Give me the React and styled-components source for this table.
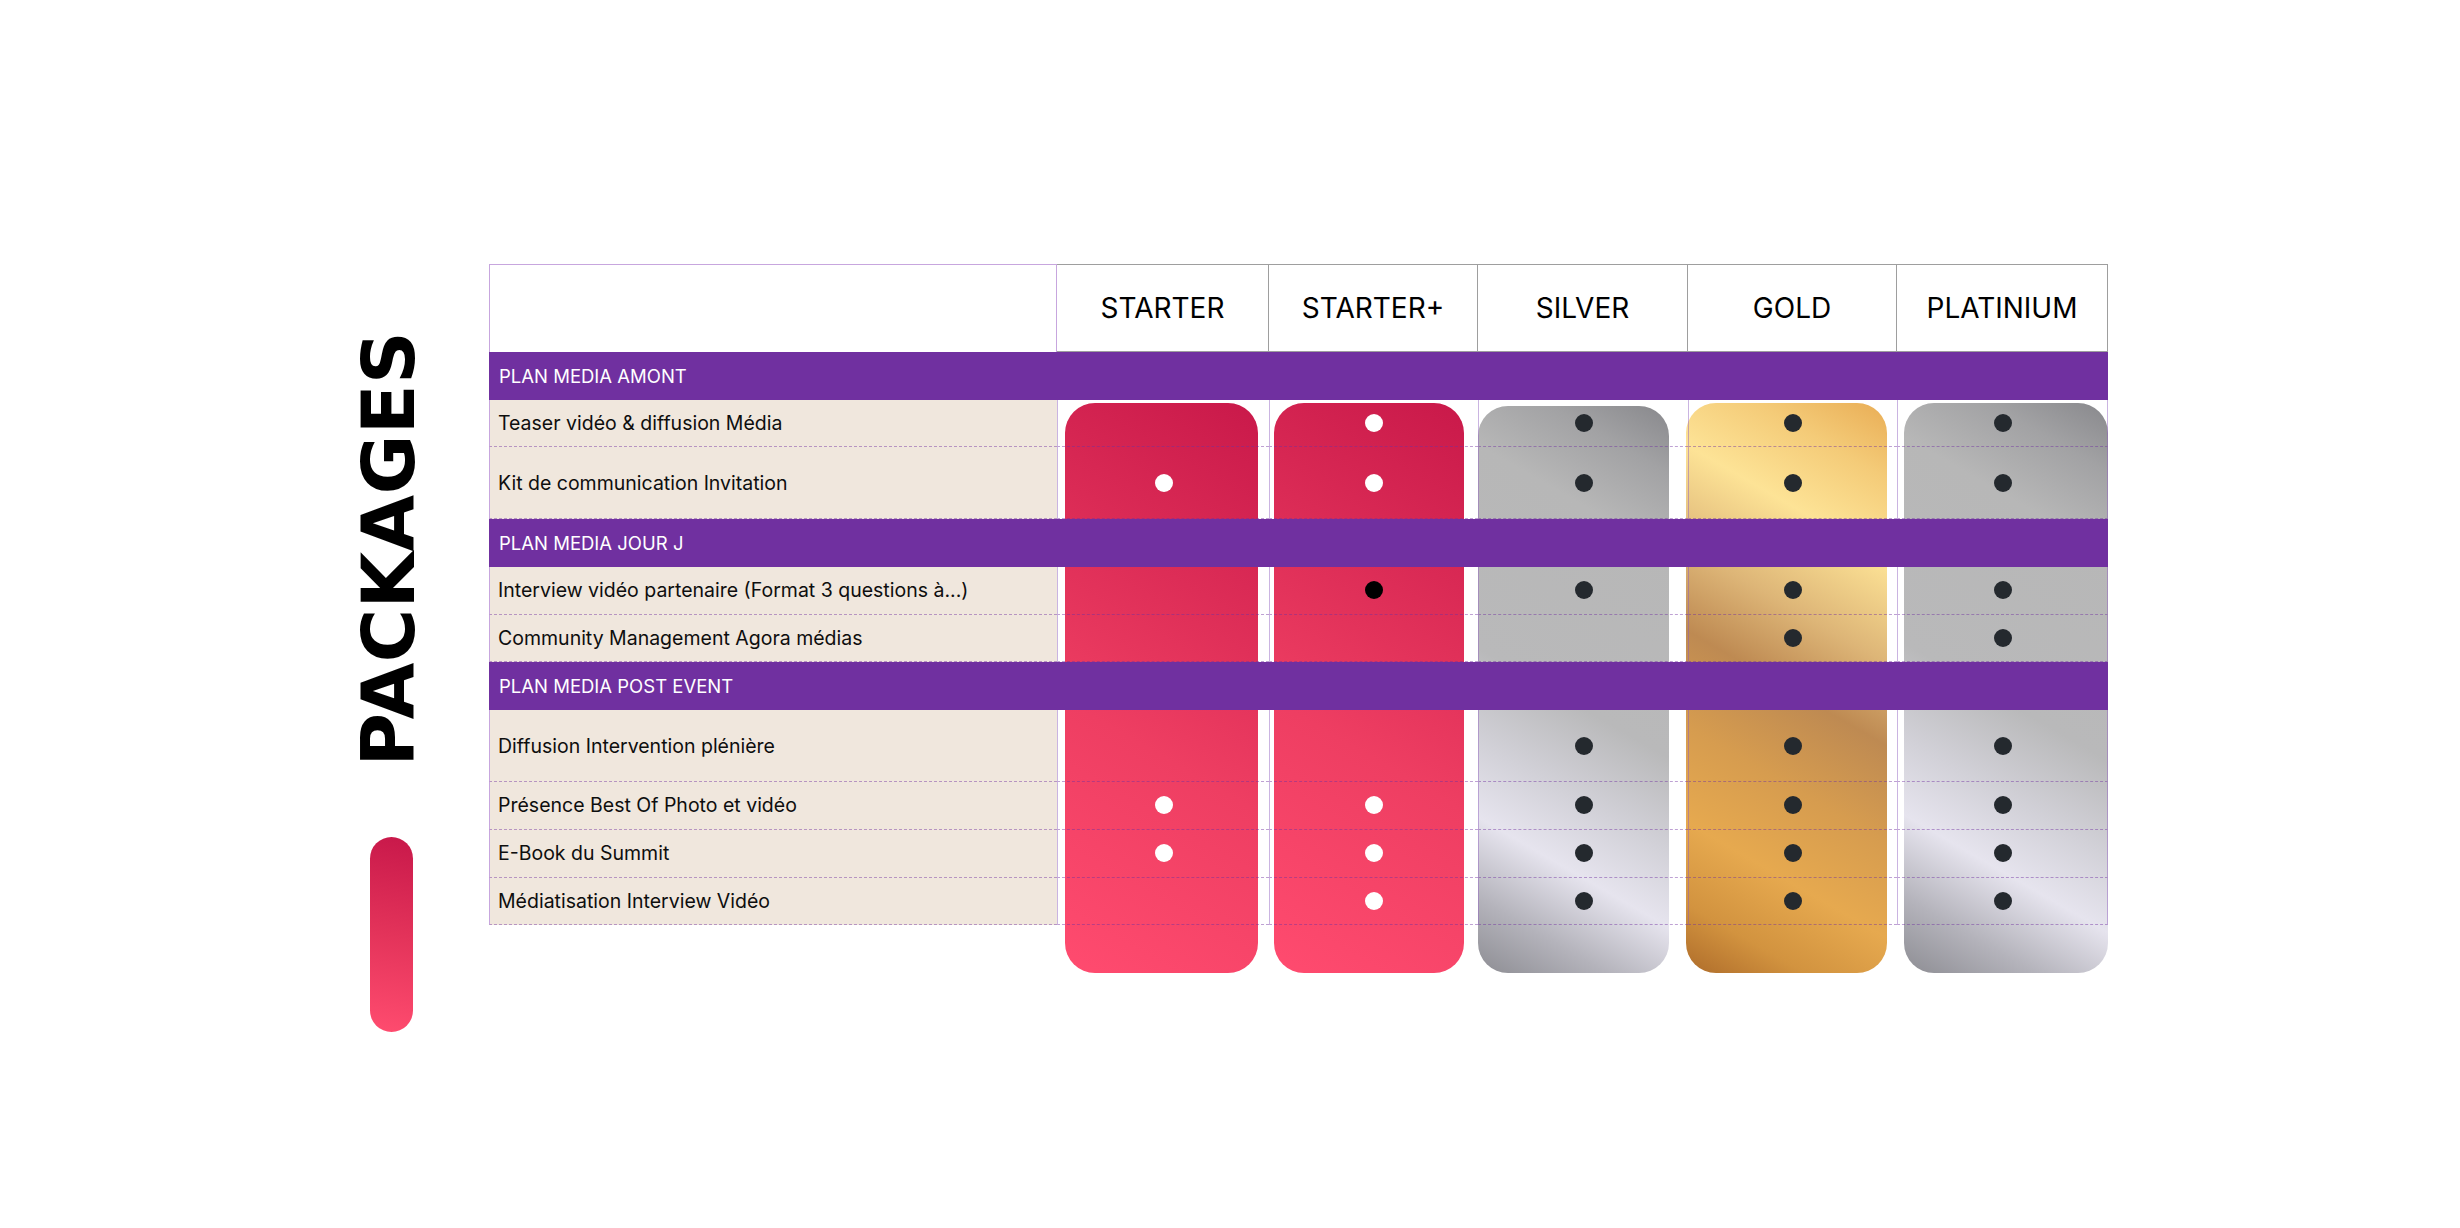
import React from 'react';
import styled, { createGlobalStyle } from 'styled-components';

const GlobalStyle = createGlobalStyle`
  html, body {
    margin: 0;
    padding: 0;
    background: #ffffff;
  }
  body {
    font-family: Inter, "Noto Sans", "Liberation Sans", sans-serif;
    color: #111;
    overflow: hidden;
  }
`;

const PURPLE = '#7030A0';
const LAVENDER = '#C7A6DE';
const ROW_LINE = '1px dashed rgba(112, 48, 160, 0.45)';
const COL_LINE = '1px solid rgba(140, 90, 190, 0.45)';

const gradients = {
  pink: 'linear-gradient(30deg, #FF4B6F 0%, #EE3E62 40%, #DA2A55 72%, #C9194A 100%)',
  silver:
    'linear-gradient(30deg, #8D8D93 0%, #B4B3BB 11%, #E6E4EE 23%, #D2D1D8 34%, #B9B9BA 48%, #B7B7B7 78%, #A2A2A4 90%, #88888C 100%)',
  gold:
    'linear-gradient(30deg, #AE6C2A 0%, #D2933F 10%, #E6A94F 22%, #D69C4F 36%, #BE8A52 50%, #DDB577 62%, #FDE396 77%, #F4CB78 89%, #E9AD55 100%)',
};

const Page = styled.div`
  display: flex;
  align-items: flex-start;
  gap: 74px;
  padding: 264px 0 0 362px;
  min-height: 100vh;
  box-sizing: border-box;
`;

const Side = styled.div`
  width: 53px;
  display: flex;
  flex-direction: column;
  align-items: center;
  gap: 70px;
  padding-top: 67px;
`;

const Title = styled.div`
  writing-mode: vertical-rl;
  transform: rotate(180deg);
  font-family: "DejaVu Sans", "Liberation Sans", sans-serif;
  font-weight: 700;
  font-size: 73px;
  line-height: 0.74;
  letter-spacing: 0.4px;
  color: #000;
`;

const SidePill = styled.div`
  width: 43px;
  height: 195px;
  margin-left: 5px;
  border-radius: 22px;
  background: linear-gradient(190deg, #C8184A 0%, #E3335A 50%, #FF4C6F 100%);
`;

const Table = styled.div`
  display: grid;
  grid-template-columns: 568px 212px 209px 210px 209px 211px;
  grid-template-rows: 88px repeat(2, 47.7px) 72px repeat(4, 47.7px) 72px repeat(4, 47.7px);
`;

const HeadBlank = styled.div`
  grid-row: 1;
  grid-column: 1;
  box-sizing: border-box;
  border-top: 1px solid ${LAVENDER};
  border-left: 1px solid ${LAVENDER};
  border-right: 1px solid ${LAVENDER};
`;

const HeadCell = styled.div`
  grid-row: 1;
  grid-column: ${(p) => p.$col};
  box-sizing: border-box;
  border-top: 1px solid #9e9e9e;
  border-right: 1px solid #9e9e9e;
  border-bottom: 1px solid #9e9e9e;
  display: flex;
  align-items: center;
  justify-content: center;
  font-size: 28px;
  font-weight: 400;
  color: #000;
`;

const Section = styled.div`
  grid-row: ${(p) => p.$row};
  grid-column: 1 / -1;
  position: relative;
  z-index: 2;
  background: ${PURPLE};
  color: #fff;
  display: flex;
  align-items: center;
  padding-left: 10px;
  font-size: 18.5px;
`;

const Label = styled.div`
  grid-row: ${(p) => p.$row};
  grid-column: 1;
  box-sizing: border-box;
  background: #F0E7DD;
  border-left: 1px solid ${LAVENDER};
  border-bottom: ${ROW_LINE};
  display: flex;
  align-items: center;
  padding-left: 8px;
  font-size: 19.5px;
  font-weight: 400;
  color: #0e0e0e;
  white-space: nowrap;
`;

const Pill = styled.div`
  grid-row: 3 / 14;
  grid-column: ${(p) => p.$col};
  margin: ${(p) => p.$top}px ${(p) => p.$right}px 0 ${(p) => p.$left}px;
  border-radius: 30px;
  background: ${(p) => gradients[p.$tone]};
  position: relative;
  z-index: 0;
`;

const Mark = styled.div`
  grid-row: ${(p) => p.$row};
  grid-column: ${(p) => p.$col};
  position: relative;
  z-index: 1;
  box-sizing: border-box;
  border-left: ${COL_LINE};
  border-right: ${(p) => (p.$last ? COL_LINE : 'none')};
  border-bottom: ${ROW_LINE};
  display: flex;
  align-items: center;
  justify-content: center;
`;

const Dot = styled.span`
  width: 18px;
  height: 18px;
  border-radius: 50%;
  background: ${(p) => (p.$kind === 'w' ? '#ffffff' : p.$kind === 'k' ? '#000000' : '#24292E')};
`;

const plans = [
  { name: 'STARTER', tone: 'pink', left: 8, right: 11, top: 3 },
  { name: 'STARTER+', tone: 'pink', left: 5, right: 14, top: 3 },
  { name: 'SILVER', tone: 'silver', left: 0, right: 19, top: 6 },
  { name: 'GOLD', tone: 'gold', left: -2, right: 10, top: 3 },
  { name: 'PLATINIUM', tone: 'silver', left: 7, right: 0, top: 3 },
];

const sections = [
  {
    title: 'PLAN MEDIA AMONT',
    rows: [
      { label: 'Teaser vidéo & diffusion Média', marks: [0, 'w', 'd', 'd', 'd'] },
      { label: 'Kit de communication Invitation', marks: ['w', 'w', 'd', 'd', 'd'] },
    ],
  },
  {
    title: 'PLAN MEDIA JOUR J',
    rows: [
      { label: 'Interview vidéo partenaire (Format 3 questions à...)', marks: [0, 'k', 'd', 'd', 'd'] },
      { label: 'Community Management Agora médias', marks: [0, 0, 0, 'd', 'd'] },
    ],
  },
  {
    title: 'PLAN MEDIA POST EVENT',
    rows: [
      { label: 'Diffusion Intervention plénière', marks: [0, 0, 'd', 'd', 'd'] },
      { label: 'Présence Best Of Photo et vidéo', marks: ['w', 'w', 'd', 'd', 'd'] },
      { label: 'E-Book du Summit', marks: ['w', 'w', 'd', 'd', 'd'] },
      { label: 'Médiatisation Interview Vidéo', marks: [0, 'w', 'd', 'd', 'd'] },
    ],
  },
];

const Body = () => {
  const cells = [];
  let row = 2;
  sections.forEach((s) => {
    cells.push(
      <Section key={s.title} $row={row}>
        {s.title}
      </Section>
    );
    row += 1;
    s.rows.forEach((r) => {
      cells.push(
        <Label key={r.label} $row={row}>
          {r.label}
        </Label>
      );
      r.marks.forEach((m, i) => {
        cells.push(
          <Mark key={r.label + i} $row={row} $col={i + 2} $last={i === 4}>
            {m ? <Dot $kind={m} /> : null}
          </Mark>
        );
      });
      row += 1;
    });
  });
  return cells;
};

const App = () => (
  <>
    <GlobalStyle />
    <Page>
      <Side>
        <Title>PACKAGES</Title>
        <SidePill />
      </Side>
      <Table>
        <HeadBlank />
        {plans.map((p, i) => (
          <HeadCell key={p.name} $col={i + 2}>
            {p.name}
          </HeadCell>
        ))}
        {plans.map((p, i) => (
          <Pill
            key={p.name + '-pill'}
            $col={i + 2}
            $tone={p.tone}
            $left={p.left}
            $right={p.right}
            $top={p.top}
          />
        ))}
        <Body />
      </Table>
    </Page>
  </>
);

export default App;
